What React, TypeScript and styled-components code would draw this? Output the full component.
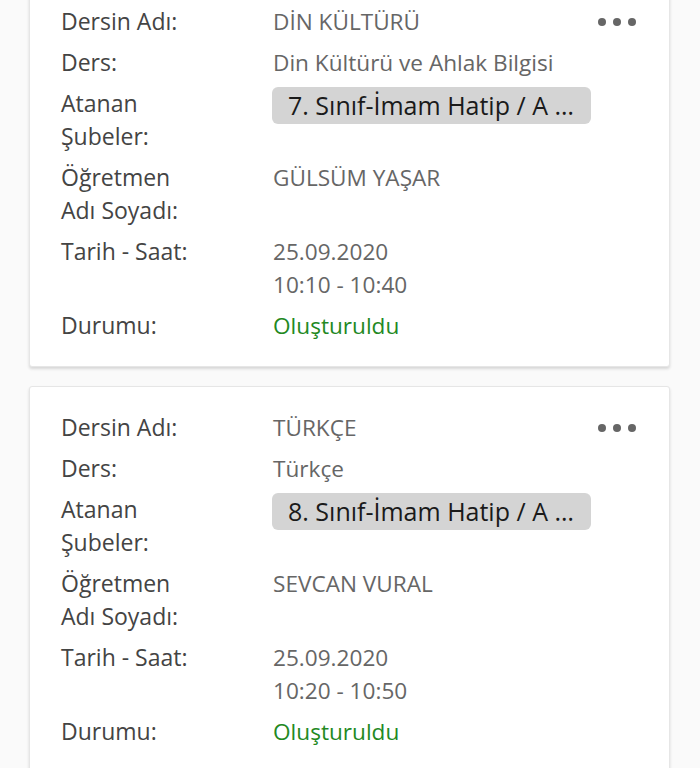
import React from "react";
import styled, { createGlobalStyle } from "styled-components";

const GlobalStyle = createGlobalStyle`
  html, body {
    margin: 0;
    padding: 0;
    background: #fafafa;
    font-family: "Open Sans", "Noto Sans", sans-serif;
  }
  body { overflow: hidden; }
`;

const Page = styled.div`
  height: 768px;
  overflow: hidden;
`;

const List = styled.div`
  display: flex;
  flex-direction: column;
  gap: 19px;
  margin-top: -20px;
  padding: 0 30px 0 29px;
`;

const Card = styled.div`
  background: #fff;
  border: 1px solid #e6e6e6;
  border-radius: 3px;
  box-shadow: 0 2px 3px rgba(0, 0, 0, 0.14);
  padding: 24px 32px 24px 31px;
  display: flex;
  flex-direction: column;
  gap: 8px;
`;

const Row = styled.div`
  display: flex;
  align-items: flex-start;
`;

const Label = styled.div`
  width: 212px;
  flex-shrink: 0;
  font-size: 23px;
  line-height: 33px;
  color: #444;
  font-weight: 500;
`;

const Value = styled.div<{ $tone?: "green" }>`
  flex: 1;
  font-size: 22.6px;
  line-height: 33px;
  color: ${(p) => (p.$tone === "green" ? "#23891f" : "#666")};
`;

const Badge = styled.div`
  display: inline-block;
  width: 319px;
  box-sizing: border-box;
  height: 37px;
  line-height: 37px;
  padding: 0 16px;
  margin-left: -1px;
  background: #d4d4d4;
  border-radius: 6px;
  color: #1a1a1a;
  font-size: 25px;
  white-space: nowrap;
  overflow: hidden;
`;

const MenuButton = styled.button`
  display: flex;
  gap: 7px;
  align-items: center;
  height: 33px;
  padding: 0;
  margin-right: 1px;
  border: none;
  background: none;
  cursor: pointer;
`;

const Dot = styled.span`
  width: 8px;
  height: 8px;
  border-radius: 50%;
  background: #666;
`;

type Lesson = {
  name: string;
  course: string;
  branch: string;
  teacher: string;
  date: string;
  time: string;
  status: string;
};

const lessons: Lesson[] = [
  {
    name: "DİN KÜLTÜRÜ",
    course: "Din Kültürü ve Ahlak Bilgisi",
    branch: "7. Sınıf-İmam Hatip / A …",
    teacher: "GÜLSÜM YAŞAR",
    date: "25.09.2020",
    time: "10:10 - 10:40",
    status: "Oluşturuldu",
  },
  {
    name: "TÜRKÇE",
    course: "Türkçe",
    branch: "8. Sınıf-İmam Hatip / A …",
    teacher: "SEVCAN VURAL",
    date: "25.09.2020",
    time: "10:20 - 10:50",
    status: "Oluşturuldu",
  },
];

const LessonCard = ({ l }: { l: Lesson }) => (
  <Card>
    <Row>
      <Label>Dersin Adı:</Label>
      <Value>{l.name}</Value>
      <MenuButton aria-label="menu">
        <Dot />
        <Dot />
        <Dot />
      </MenuButton>
    </Row>
    <Row>
      <Label>Ders:</Label>
      <Value>{l.course}</Value>
    </Row>
    <Row>
      <Label>
        Atanan
        <br />
        Şubeler:
      </Label>
      <Value>
        <Badge>{l.branch}</Badge>
      </Value>
    </Row>
    <Row>
      <Label>
        Öğretmen
        <br />
        Adı Soyadı:
      </Label>
      <Value>{l.teacher}</Value>
    </Row>
    <Row>
      <Label>Tarih - Saat:</Label>
      <Value>
        {l.date}
        <br />
        {l.time}
      </Value>
    </Row>
    <Row>
      <Label>Durumu:</Label>
      <Value $tone="green">{l.status}</Value>
    </Row>
  </Card>
);

export default function App() {
  return (
    <Page>
      <GlobalStyle />
      <List>
        {lessons.map((l, i) => (
          <LessonCard key={i} l={l} />
        ))}
      </List>
    </Page>
  );
}
